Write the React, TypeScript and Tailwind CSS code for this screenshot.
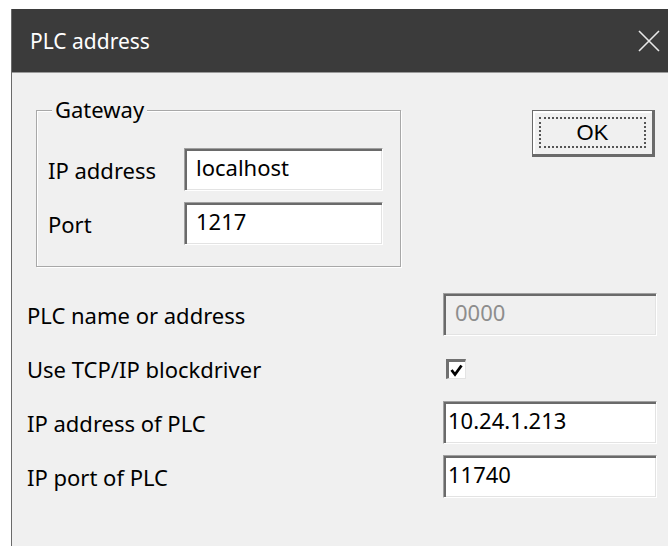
import { useState } from "react";

// sunken edit box, win32 style
function EditBox({ value, disabled, pad = "pl-[11px]" }: { value: string; disabled?: boolean; pad?: string }) {
  return (
    <div
      className={`h-[43px] border border-t-[#a0a0a0] border-l-[#a0a0a0] border-b-[#ffffff] border-r-[#ffffff]
        shadow-[inset_2px_2px_0_#6a6a6a,inset_-1px_-1px_0_#e3e3e3] pt-[3px] ${pad} leading-[30px]
        ${disabled ? "bg-[#f0f0f0] text-[#8d8d8d]" : "bg-white text-black"}`}
    >
      {value}
    </div>
  );
}

export default function App() {
  const [useTcp, setUseTcp] = useState<boolean>(true);

  return (
    <div className="w-[668px] h-[546px] bg-white overflow-hidden pl-[11px] pt-[9px] font-['Noto_Sans',sans-serif] text-[22px] text-black">
      <div className="h-full border-l border-[#6a6a6a] flex flex-col">
        {/* title bar */}
        <div className="h-[63px] bg-[#3b3b3b] flex items-center justify-between pl-[18px] pr-[8px]">
          <span className="text-white text-[21px] leading-[30px]">PLC address</span>
          <svg width="22" height="22" viewBox="0 0 22 22">
            <path d="M1 1 L21 21 M21 1 L1 21" stroke="#e8e8e8" strokeWidth="1.6" fill="none" />
          </svg>
        </div>
        <div className="h-px bg-[#9a9a9a]" />

        <div className="flex-1 bg-[#f0f0f0]">
          <div className="flex justify-between">
            {/* Gateway group */}
            <div className="relative mt-[37px] ml-[24px] w-[365px] h-[157px] border border-[#a8a8a8] shadow-[1px_1px_0_#fff,inset_1px_1px_0_#fff] pt-[37px] pl-[11px]">
              <span className="absolute left-[15px] -top-[17px] px-[3px] bg-[#f0f0f0] leading-[30px]">Gateway</span>
              <div className="flex flex-col gap-[11px]">
                <div className="flex items-center">
                  <span className="w-[136px] leading-[30px]">IP address</span>
                  <div className="w-[199px]">
                    <EditBox value="localhost" />
                  </div>
                </div>
                <div className="flex items-center">
                  <span className="w-[136px] leading-[30px]">Port</span>
                  <div className="w-[199px]">
                    <EditBox value="1217" />
                  </div>
                </div>
              </div>
            </div>

            <button
              className="mt-[37px] mr-[13px] w-[123px] h-[47px] bg-[#f0f0f0] border-t border-l border-b-[3px] border-r-[3px] border-[#6a6a6a]
                shadow-[inset_2px_2px_0_#ffffff] p-[6px]"
            >
              <div className="h-full border-2 border-dotted border-[#555] flex items-center justify-center font-['Liberation_Sans',sans-serif] text-[22px] leading-none">
                OK
              </div>
            </button>
          </div>

          {/* PLC settings */}
          <div className="mt-[26px] pl-[15px] flex flex-col gap-[11px]">
            <div className="flex items-center h-[43px]">
              <span className="w-[416px] leading-[30px]">PLC name or address</span>
              <div className="w-[214px]">
                <EditBox value="0000" disabled />
              </div>
            </div>
            <div className="flex items-center h-[43px]">
              <span className="w-[416px] leading-[30px]">Use TCP/IP blockdriver</span>
              <div
                className="ml-[3px] w-[20px] h-[20px] bg-white border-t-[3px] border-l-[3px] border-[#707070] border-b border-r border-b-[#e3e3e3] border-r-[#e3e3e3] flex items-center justify-center"
                onClick={() => setUseTcp(!useTcp)}
              >
                {useTcp && (
                  <svg width="16" height="16" viewBox="0 0 16 16">
                    <path d="M2.5 8 L6 12.5 L12.5 3.5" stroke="#000" strokeWidth="2.8" fill="none" />
                  </svg>
                )}
              </div>
            </div>
            <div className="flex items-center h-[43px]">
              <span className="w-[416px] leading-[30px]">IP address of PLC</span>
              <div className="w-[214px]">
                <EditBox value="10.24.1.213" pad="pl-[4px]" />
              </div>
            </div>
            <div className="flex items-center h-[43px]">
              <span className="w-[416px] leading-[30px]">IP port of PLC</span>
              <div className="w-[214px]">
                <EditBox value="11740" pad="pl-[4px]" />
              </div>
            </div>
          </div>
        </div>
      </div>
    </div>
  );
}
